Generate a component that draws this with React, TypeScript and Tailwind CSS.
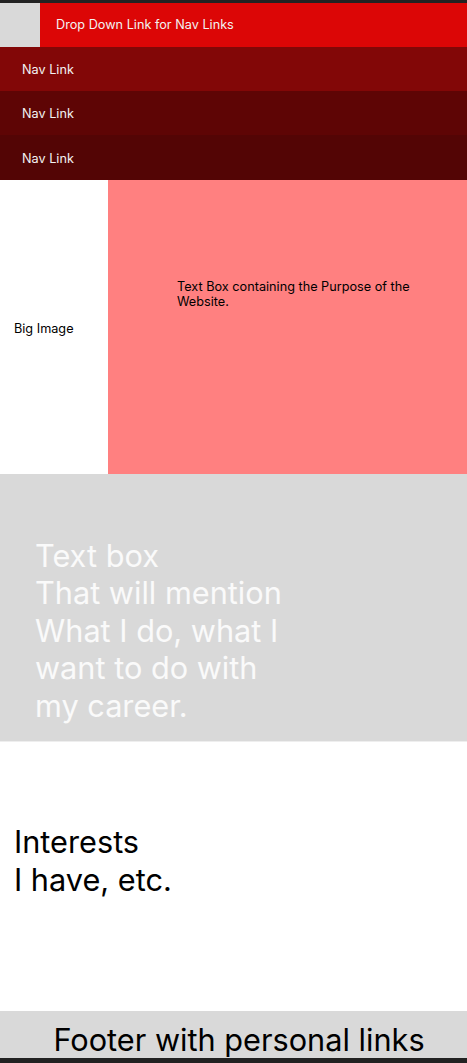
export default function App() {
  return (
    <div className="w-[467px] min-h-[1063px] flex flex-col bg-white font-['Inter',sans-serif]">
      <div className="h-[3px] bg-[#222222]" />

      {/* nav */}
      <nav className="flex flex-col text-[12.7px] text-[#f2f2f2]">
        <div className="flex h-[44px] bg-[#dc0606]">
          <div className="w-[40px] bg-[#d9d9d9]" />
          <a className="flex items-center pl-[16px]">Drop Down Link for Nav Links</a>
        </div>
        <a className="flex items-center h-[44px] pl-[22px] pt-[2px] bg-[#820707]">Nav Link</a>
        <a className="flex items-center h-[44px] pl-[22px] pt-[2px] bg-[#5e0505]">Nav Link</a>
        <a className="flex items-center h-[45px] pl-[22px] pt-[2px] bg-[#530505]">Nav Link</a>
      </nav>

      {/* hero */}
      <section className="flex h-[294px]">
        <div className="w-[108px] flex items-center pl-[14px] pt-[4px] text-[12.7px] text-black">Big Image</div>
        <div className="flex-1 bg-[#ff8080] pt-[99px] pl-[69px] pr-[40px] text-[12.7px] leading-[15px] text-black">
          Text Box containing the Purpose of the Website.
        </div>
      </section>

      {/* about */}
      <section className="h-[268px] bg-[#d9d9d9] flex items-center pl-[35px] border-b border-[#eeeeee]">
        <p className="text-[30.7px] leading-[37.5px] text-[#fafafa] mt-[46px]">
          Text box
          <br />
          That will mention
          <br />
          What I do, what I
          <br />
          want to do with
          <br />
          my career.
        </p>
      </section>

      {/* interests */}
      <section className="h-[269px] flex items-center pl-[14px]">
        <p className="text-[30.7px] leading-[37.5px] text-black mt-[-32px]">
          Interests
          <br />
          I have, etc.
        </p>
      </section>

      <footer className="h-[47px] bg-[#d9d9d9] flex items-end justify-center pl-[11px] text-[30.7px] leading-[37.5px] text-black">
        Footer with personal links
      </footer>
      <div className="h-[5px] bg-[#222222]" />
    </div>
  )
}
